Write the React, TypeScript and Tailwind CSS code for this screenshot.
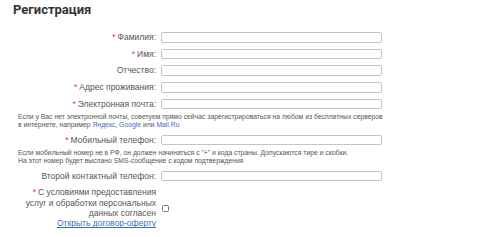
import React from 'react';

const Req = () => <span className="text-[#e53935] mr-[2px]">*</span>;

interface RowProps {
  label: string;
  required?: boolean;
}

const Row: React.FC<RowProps> = ({ label, required }) => (
  <div className="flex items-center h-[16.7px]">
    <label className="w-[157px] text-right pr-[1px] text-[8.5px] text-[#555] leading-none">
      {required && <Req />}
      {label}:
    </label>
    <input
      type="text"
      className="ml-[4px] w-[221px] h-[10.5px] border border-[#c4c4c4] rounded-[2px] bg-white outline-none"
    />
  </div>
);

const Hint: React.FC<{ children: React.ReactNode }> = ({ children }) => (
  <p className="pl-[18px] text-[6.8px] leading-[7.6px] text-[#555]">{children}</p>
);

export default function App() {
  return (
    <div className="w-[500px] h-[237px] bg-white overflow-hidden font-['Liberation_Sans',Arial,sans-serif]">
      <h1 className="pl-[13px] pt-[2px] font-['Roboto',sans-serif] text-[13px] font-bold text-[#333] leading-[16px]">
        Регистрация
      </h1>
      <div className="mt-[11px]">
        <Row label="Фамилия" required />
        <Row label="Имя" required />
        <Row label="Отчество" />
        <Row label="Адрес проживания" required />
        <Row label="Электронная почта" required />
      </div>
      <div className="mt-[1px]">
        <Hint>
          Если у Вас нет электронной почты, советуем прямо сейчас зарегистрироваться на любом из бесплатных серверов
          <br />в интернете, например <a className="text-[#3c6fc2]">Яндекс</a>, <a className="text-[#3c6fc2]">Google</a> или{' '}
          <a className="text-[#3c6fc2]">Mail.Ru</a>
        </Hint>
      </div>
      <div className="mt-[3px]">
        <Row label="Мобильный телефон" required />
      </div>
      <div className="mt-[1px]">
        <Hint>
          Если мобильный номер не в РФ, он должен начинаться с "+" и кода страны. Допускаются тире и скобки.
          <br />На этот номер будет выслано SMS-сообщение с кодом подтверждения
        </Hint>
      </div>
      <div className="mt-[3px]">
        <Row label="Второй контактный телефон" />
      </div>
      <div className="flex items-center mt-[3px]">
        <div className="w-[157px] text-right pr-[1px] text-[8.5px] leading-[10.4px] text-[#555]">
          <Req />С условиями предоставления
          <br />услуг и обработки персональных
          <br />данных согласен
          <br />
          <a className="text-[#3c6fc2] underline">Открыть договор-оферту</a>
        </div>
        <input type="checkbox" className="ml-[5px] w-[7px] h-[7px] m-0 appearance-none border border-[#777] rounded-[1.5px] bg-white" />
      </div>
    </div>
  );
}
